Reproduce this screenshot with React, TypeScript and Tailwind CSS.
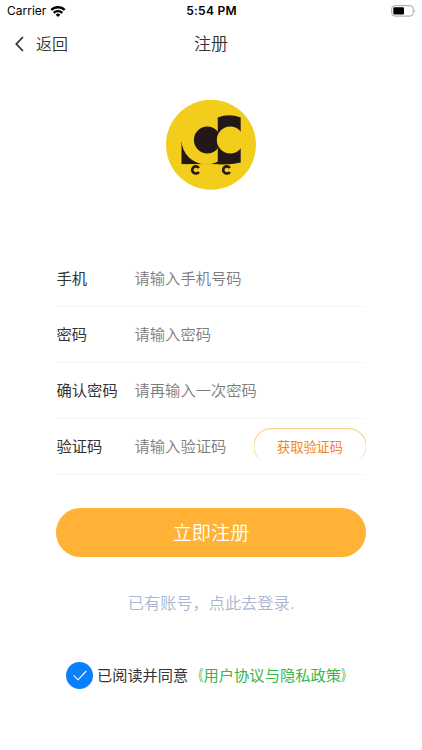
import React from "react";

function Logo() {
  return (
    <svg className="size-[90px]" viewBox="10 10 90 90" aria-label="CC">
      <defs>
        <clipPath id="engine"><path d="M61.5 27.5Q73 23 84.7 27.5V72.5Q75 75 61.5 74.3Z" /></clipPath>
        <clipPath id="base"><rect x="25" y="50" width="37" height="24.3" /></clipPath>
      </defs>
      <circle cx="55" cy="54.7" r="45" fill="#f3cd1c" />
      <g clipPath="url(#base)">
        <rect x="25.5" y="52" width="36.5" height="22.3" fill="#231815" />
        <circle cx="50.3" cy="49.7" r="24.8" fill="#f3cd1c" />
      </g>
      <circle cx="51.3" cy="50" r="13.4" fill="#231815" />
      <rect x="61.5" y="24" width="24" height="52" fill="#231815" clipPath="url(#engine)" />
      <circle cx="74.3" cy="50" r="13.5" fill="#f3cd1c" />
      <g fill="none" stroke="#231815" strokeWidth="2.7">
        <path d="M42.8 77.9A3.6 3.6 0 1 0 42.8 81.9" />
        <path d="M73.8 77.9A3.6 3.6 0 1 0 73.8 81.9" />
      </g>
    </svg>
  );
}

function StatusBar() {
  return (
    <div className="grid h-[22px] grid-cols-3 items-center pl-[7px] pr-[6px] text-black">
      <div className="flex items-center gap-[4px] text-[12px] leading-none">
        <span>Carrier</span>
        <svg width="16" height="11" viewBox="0 0 15 11" fill="none" stroke="#000" strokeWidth="2.4">
          <path d="M.8 4A9.5 9.5 0 0 1 14.2 4" />
          <path d="M3.2 6.9A6 6 0 0 1 11.8 6.9" />
          <path d="M7.5 11 5.2 8.7A3.3 3.3 0 0 1 9.8 8.7Z" fill="#000" stroke="none" />
        </svg>
      </div>
      <div className="text-center text-[12px] font-semibold leading-none tracking-[0.25px]">5:54 PM</div>
      <div className="flex justify-end">
        <svg width="25" height="12" viewBox="0 0 25 12">
          <rect x=".7" y=".7" width="21.5" height="10.4" rx="3" fill="none" stroke="#a3a3a3" />
          <rect x="2.3" y="2.3" width="10.7" height="7.2" rx="1.2" fill="#000" />
          <path d="M23.5 4.2Q25 5.8 23.5 7.6Z" fill="#999" />
        </svg>
      </div>
    </div>
  );
}

function Field({ label, hint, children }: { label: string; hint: string; children?: React.ReactNode }) {
  return (
    <div className="flex h-14 items-center border-b border-[#f5f5f5] text-[15.3px]">
      <span className="w-[78.5px] shrink-0 pl-[0.5px] pt-[2px] text-[#333]">{label}</span>
      <span className="flex-1 pt-[2px] font-[350] text-[#7c7c7c]">{hint}</span>
      {children}
    </div>
  );
}

export default function App() {
  return (
    <div className="h-[750px] w-[422px] overflow-hidden bg-white font-['Inter','Noto_Sans_CJK_SC',sans-serif] text-[#333]">
      <StatusBar />
      <header className="grid h-[44px] grid-cols-3 items-center">
        <div className="flex items-center gap-[12px] pl-[15px] text-[16px] font-[350]">
          <svg width="9" height="16" viewBox="0 0 9 16" fill="none" stroke="#333" strokeWidth="1.8">
            <path d="M8 1 1.3 8 8 15" />
          </svg>
          <span>返回</span>
        </div>
        <h1 className="pt-[2px] text-center text-[17px] font-[350]">注册</h1>
      </header>
      <div className="mt-[34px] flex justify-center"><Logo /></div>
      <main className="mx-[56px] mt-[61px]">
        <Field label="手机" hint="请输入手机号码" />
        <Field label="密码" hint="请输入密码" />
        <Field label="确认密码" hint="请再输入一次密码" />
        <Field label="验证码" hint="请输入验证码">
          <button className="relative h-[36px] w-[112px] pt-[2px] text-[13.2px] text-[#f58220]">
            <svg className="absolute -top-px left-0" width="112" height="36" viewBox="0 0 112 36" fill="none">
              <defs>
                <linearGradient id="edge" x1="0" y1="0" x2="0" y2="36" gradientUnits="userSpaceOnUse">
                  <stop stopColor="#fbd48d" />
                  <stop offset=".55" stopColor="#fbd48d" />
                  <stop offset=".97" stopColor="#fff" />
                </linearGradient>
              </defs>
              <path d="M9 33.5A17.5 17.5 0 0 1 18 .6H94A17.5 17.5 0 0 1 103 33.5" stroke="url(#edge)" strokeWidth="1.1" />
            </svg>
            获取验证码
          </button>
        </Field>
        <button className="mt-[33px] block h-[49px] w-full rounded-full bg-[#ffb235] pt-[2px] text-[19.2px] font-[350] text-white">立即注册</button>
        <p className="mt-[34px] text-center text-[16.2px] font-[350] leading-6 text-[#a9b5d1]">已有账号，点此去登录.</p>
      </main>
      <footer className="mt-[47px] flex items-center pl-[66px] text-[15.2px]">
        <span className="mr-[4px] flex size-[27px] items-center justify-center rounded-full bg-[#0a80ff]">
          <svg width="14" height="11" viewBox="0 0 14 11" fill="none" stroke="#fff" strokeWidth="1.1">
            <path d="M.7 5.3 5 9.8 13.3 1" />
          </svg>
        </span>
        <span className="pt-[2px]">已阅读并同意</span>
        <span className="flex pt-[2px] text-[15.3px] text-[#39b54a]">
          <span className="inline-block origin-right scale-x-[0.65]">《</span>
          <span>用户协议与隐私政策</span>
          <span className="inline-block origin-left scale-x-[0.65]">》</span>
        </span>
      </footer>
    </div>
  );
}
